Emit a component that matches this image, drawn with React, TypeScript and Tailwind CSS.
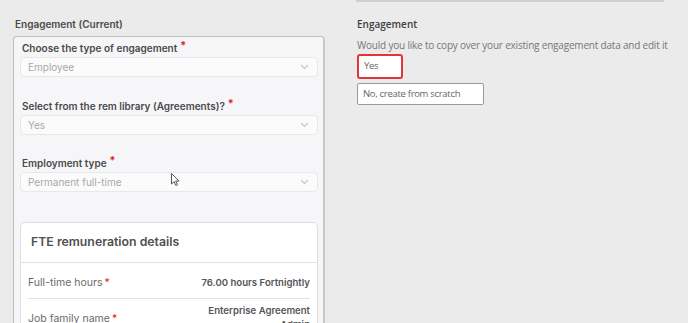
import React from "react";

const Star = () => <span className="text-[#e02020] ml-[3px] relative top-[-3px] text-[11px]">*</span>;

const Chevron = () => (
  <svg width="9" height="6" viewBox="0 0 9 6" className="shrink-0">
    <path d="M1 1l3.5 3.5L8 1" fill="none" stroke="#c4c4c4" strokeWidth="1.1" />
  </svg>
);

const Field = ({ label, value }: { label: string; value: string }) => (
  <div className="flex flex-col shrink-0">
    <div className="h-[18px] flex items-center pl-[2px] text-[10px] font-semibold text-[#4a4a4a]">
      {label}
      <Star />
    </div>
    <div className="h-[20px] rounded-[4px] border border-[#e8e8ea] bg-[#fbfbfb] flex items-center justify-between pl-[7px] pr-[8px] text-[10px] text-[#a8a8a8]">
      <span>{value}</span>
      <Chevron />
    </div>
  </div>
);

export default function App() {
  return (
    <div className="w-[688px] h-[323px] overflow-hidden bg-[#ebebeb] flex items-start relative" style={{ fontFamily: "Inter, 'Noto Sans', sans-serif" }}>
      {/* Left column */}
      <div className="ml-[13px] w-[312px] shrink-0 flex flex-col">
        <div className="h-[36px] shrink-0 pt-[16px] pl-[2px] text-[10px] font-semibold text-[#4a4a4a] leading-[16px]">
          Engagement (Current)
        </div>
        <div className="shrink-0 h-[300px] rounded-t-[4px] border border-[#bdbdbd] border-r-2 border-r-[#c8c8c8] bg-[#f6f6f8] pl-[6px] pr-[5px] pt-[2px] flex flex-col">
          <Field label="Choose the type of engagement" value="Employee" />
          <div className="h-[20px] shrink-0" />
          <Field label="Select from the rem library (Agreements)?" value="Yes" />
          <div className="h-[19px] shrink-0" />
          <Field label="Employment type" value="Permanent full-time" />
          <div className="h-[30px] shrink-0" />
          <div className="shrink-0 rounded-t-[5px] border border-[#dedede] bg-white">
            <div className="h-[40px] flex items-center pl-[10px] text-[12.3px] font-semibold text-[#505050] border-b border-[#e2e2e2]">
              FTE remuneration details
            </div>
            <div className="px-[7px]">
              <div className="h-[36px] pt-[5px] flex items-center justify-between border-b border-[#e2e2e2]">
                <span className="text-[#6a6a6a] text-[10.5px]">
                  Full-time hours<span className="text-[#e02020] ml-[2px]">*</span>
                </span>
                <span className="font-semibold text-[#555] text-[9.6px]">76.00 hours Fortnightly</span>
              </div>
              <div className="h-[40px] flex items-start justify-between">
                <span className="text-[#6a6a6a] mt-[12px] text-[10.5px]">
                  Job family name<span className="text-[#e02020] ml-[2px]">*</span>
                </span>
                <span className="font-semibold text-[#555] text-right leading-[14px] mt-[5px] text-[9.6px]">
                  Enterprise Agreement
                  <br />
                  Admin
                </span>
              </div>
            </div>
          </div>
        </div>
      </div>

      {/* Right column */}
      <div className="ml-[32px] shrink-0 flex flex-col" style={{ fontFamily: "'Open Sans', sans-serif" }}>
        <div className="w-[308px] h-[2px] bg-[#cfcfcf] -ml-[1px]" />
        <div className="mt-[15px] text-[10px] font-semibold text-[#404040] leading-[14px]">Engagement</div>
        <div className="mt-[7px] text-[10px] tracking-[-0.2px] text-[#777] leading-[14px] whitespace-nowrap">
          Would you like to copy over your existing engagement data and edit it
        </div>
        <div className="mt-[2px] w-[46px] h-[25px] rounded-[3px] border-2 border-[#e3343a] bg-white flex items-center pl-[5px] text-[9.5px] tracking-[-0.3px] text-[#666]">
          Yes
        </div>
        <div className="mt-[4px] w-[127px] h-[22px] rounded-[2px] border border-[#9a9a9a] bg-white flex items-center pl-[5px] text-[9.5px] tracking-[-0.3px] text-[#666]">
          No, create from scratch
        </div>
      </div>

      {/* Mouse cursor overlay */}
      <svg className="absolute left-[171px] top-[173px]" width="9" height="13" viewBox="0 0 9 13">
        <path d="M0.5 0.5v10.5l2.6-2.4 1.8 3.9 1.6-0.7-1.8-3.8h3.4z" fill="white" stroke="#555" strokeWidth="1" strokeLinejoin="round" />
      </svg>
    </div>
  );
}
